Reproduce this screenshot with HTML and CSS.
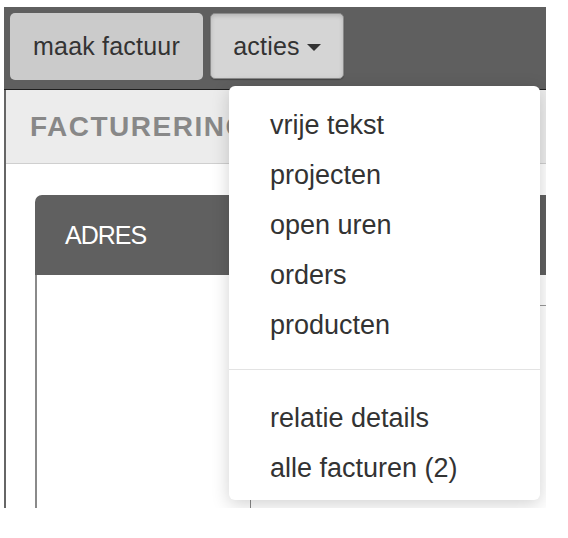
FILE: index.html
```html
<!DOCTYPE html>
<html>
<head>
<meta charset="utf-8">
<link rel="stylesheet" href="styles.css">
</head>
<body>
<div class="app">
  <div class="toolbar">
    <button class="btn">maak factuur</button>
    <button class="btn btn-active">acties <span class="caret"></span></button>
  </div>
  <div class="main">
    <div class="section-title">FACTURERING</div>
    <div class="content">
      <div class="panel">
        <div class="panel-head">ADRES</div>
        <div class="panel-body">
          <div class="col-left"></div>
          <div class="col-right"><div class="row-line"></div></div>
        </div>
      </div>
    </div>
  </div>
  <ul class="dropdown">
    <li>vrije tekst</li>
    <li>projecten</li>
    <li>open uren</li>
    <li>orders</li>
    <li>producten</li>
    <li class="divider"></li>
    <li>relatie details</li>
    <li>alle facturen (2)</li>
  </ul>
</div>
</body>
</html>
```
FILE: styles.css
```css
* { box-sizing: border-box; }
html, body { margin: 0; padding: 0; background: #fff; }
body { font-family: "Liberation Sans", Arial, sans-serif; color: #333; }

.app {
  position: relative;
  margin: 7px 0 0 4px;
  width: 542px;
  height: 501px;
  overflow: hidden;
}

.toolbar {
  display: flex;
  gap: 7px;
  height: 83px;
  padding: 6px 6px;
  background: #5f5f5f;
  border-bottom: 1px solid #1e1e1e;
}

.btn {
  font-family: inherit;
  font-size: 25px;
  letter-spacing: 0.2px;
  color: #333;
  height: 67px;
  width: 193px;
  padding: 0;
  border: 0;
  border-radius: 5px;
  background: #cbcbcb;
  display: flex;
  align-items: center;
  justify-content: center;
}
.btn-active {
  width: 134px;
  background: #d5d5d5;
  border: 1px solid #8a8a8a;
  box-shadow: inset 0 2px 4px rgba(0,0,0,0.15), 0 1px 1px rgba(0,0,0,0.25);
  height: 66px;
}
.caret {
  display: inline-block;
  width: 0; height: 0;
  margin-left: 7px;
  margin-top: 3px;
  border-left: 7px solid transparent;
  border-right: 7px solid transparent;
  border-top: 7px solid #333;
}

.main {
  height: 418px;
  border-left: 2px solid #666;
}
.section-title {
  height: 74px;
  padding: 0 0 0 24px;
  display: flex;
  align-items: center;
  background: #ececec;
  border-bottom: 1px solid #cfcfcf;
  font-size: 28px;
  letter-spacing: 1.5px;
  font-weight: bold;
  color: #888;
  white-space: nowrap;
}
.content {
  padding: 31px 0 0 29px;
  height: 344px;
}
.panel {
  height: 100%;
  display: flex;
  flex-direction: column;
}
.panel-head {
  height: 80px;
  background: #606060;
  border-top-left-radius: 7px;
  color: #fff;
  font-size: 25px;
  letter-spacing: -1px;
  padding-left: 30px;
  display: flex;
  align-items: center;
}
.panel-body {
  flex: 1;
  display: flex;
  border-left: 2px solid #8a8a8a;
}
.col-left { width: 213px; }
.col-right {
  flex: 1;
  border-left: 1px solid #888;
  padding-top: 30px;
}
.row-line { border-top: 1px solid #999; }

.dropdown {
  position: absolute;
  left: 225px;
  top: 79px;
  width: 311px;
  height: 414px;
  margin: 0;
  padding: 14px 0 0;
  list-style: none;
  background: #fff;
  border-radius: 6px;
  box-shadow: 0 4px 18px rgba(0,0,0,0.18);
}
.dropdown li {
  height: 50px;
  line-height: 50px;
  padding-left: 41px;
  font-size: 27px;
  color: #333;
}
.dropdown li.divider {
  height: 1px;
  margin: 19px 0 23px;
  background: #e3e3e3;
}
```
